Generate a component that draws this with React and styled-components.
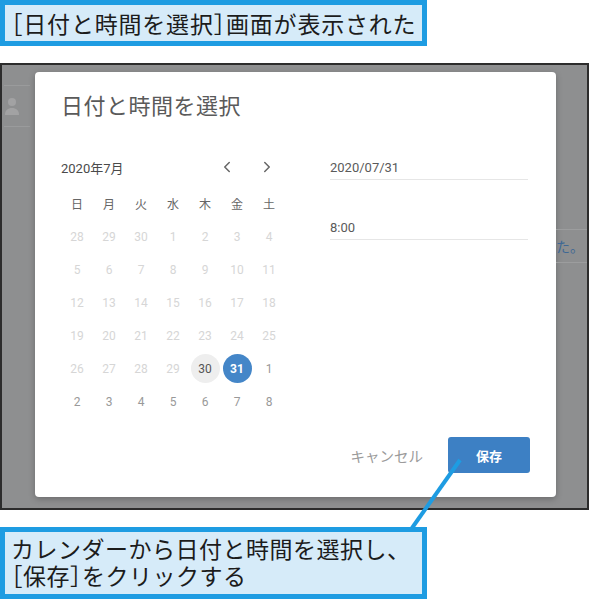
import React from "react";
import styled, { createGlobalStyle } from "styled-components";
import { ChevronLeft, ChevronRight } from "lucide-react";

const weekdays = ["日", "月", "火", "水", "木", "金", "土"];

// 6 rows, first row starts with the tail of June
const days = [
  ...[28, 29, 30].map((d) => ({ d, kind: "muted" })),
  ...Array.from({ length: 29 }, (_, i) => ({ d: i + 1, kind: "muted" })),
  { d: 30, kind: "today" },
  { d: 31, kind: "selected" },
  ...Array.from({ length: 8 }, (_, i) => ({ d: i + 1, kind: "next" })),
];

const App = () => {
  return (
    <>
      <GlobalStyle />
      <Page>
        <Caption>［日付と時間を選択］画面が表示された</Caption>

        <Frame>
          <SideStrip>
            <FaintRule />
            <svg width="16" height="20" viewBox="0 0 16 20">
              <circle cx="8" cy="6" r="4" fill="#a2a2a3" />
              <path d="M1 19c0-5 3-7 7-7s7 2 7 7z" fill="#a2a2a3" />
            </svg>
            <FaintRule />
          </SideStrip>

          <Dialog>
            <Title>日付と時間を選択</Title>
            <Body>
              <Calendar>
                <MonthBar>
                  <MonthLabel>2020年7月</MonthLabel>
                  <NavButtons>
                    <NavButton aria-label="前の月">
                      <ChevronLeft size={18} strokeWidth={2} />
                    </NavButton>
                    <NavButton aria-label="次の月">
                      <ChevronRight size={18} strokeWidth={2} />
                    </NavButton>
                  </NavButtons>
                </MonthBar>
                <DayGrid>
                  {weekdays.map((w) => (
                    <Weekday key={w}>{w}</Weekday>
                  ))}
                  {days.map((day, i) => (
                    <DayCell key={i}>
                      <Day $kind={day.kind}>{day.d}</Day>
                    </DayCell>
                  ))}
                </DayGrid>
              </Calendar>

              <Fields>
                <Field>2020/07/31</Field>
                <Field $spaced>8:00</Field>
              </Fields>
            </Body>

            <Footer>
              <CancelButton>キャンセル</CancelButton>
              <SaveButton>保存</SaveButton>
            </Footer>
          </Dialog>

          <RightStrip>
            <BackdropText>た。</BackdropText>
          </RightStrip>
        </Frame>

        <Caption $bottom>
          カレンダーから日付と時間を選択し、
          <br />
          ［保存］をクリックする
        </Caption>

        <Pointer width="60" height="80" viewBox="0 0 60 80">
          <line x1="55" y1="5" x2="7" y2="73" stroke="#1e9ce2" strokeWidth="4" />
        </Pointer>
      </Page>
    </>
  );
};

export default App;

const GlobalStyle = createGlobalStyle`
  body {
    margin: 0;
    background: #fff;
  }
  * {
    box-sizing: border-box;
  }
`;

const Page = styled.div`
  position: relative;
  width: 600px;
  height: 601px;
  overflow: hidden;
  font-family: Roboto, "Noto Sans CJK JP", sans-serif;
`;

/* "halt" gives half-width brackets that keep the tall CJK glyph */
const Caption = styled.div`
  width: 427px;
  border: 5px solid #1e9ce2;
  background: #d6ebf9;
  color: #1c1c1c;
  font-family: "Noto Sans CJK JP", sans-serif;
  font-feature-settings: "halt";
  font-size: 23px;
  letter-spacing: ${(p) => (p.$bottom ? "0.5px" : "0.8px")};
  line-height: ${(p) => (p.$bottom ? "27px" : "36px")};
  padding: ${(p) => (p.$bottom ? "3px 0 5px 6px" : "0 0 0 6px")};
  margin-top: ${(p) => (p.$bottom ? "17px" : "0")};
  white-space: nowrap;
`;

const Frame = styled.div`
  margin-top: 17px;
  width: 589px;
  height: 447px;
  border: 2px solid #2c2c2c;
  background: #8e8f90;
  display: flex;
  align-items: flex-start;
  padding-top: 7px;
`;

const SideStrip = styled.div`
  width: 33px;
  flex-shrink: 0;
  display: flex;
  flex-direction: column;
  align-items: flex-start;
  gap: 10px;
  padding: 13px 0 0 2px;
`;

const FaintRule = styled.div`
  width: 26px;
  height: 1px;
  background: #9a9b9c;
`;

const Dialog = styled.div`
  width: 521px;
  height: 425px;
  flex-shrink: 0;
  background: #fff;
  border-radius: 4px;
  box-shadow: 0 2px 6px rgba(0, 0, 0, 0.25);
  padding: 0 26px;
  display: flex;
  flex-direction: column;
`;

const Title = styled.h2`
  margin: 0;
  padding-top: 21px;
  font-size: 22px;
  letter-spacing: 0.5px;
  line-height: 28px;
  font-weight: 400;
  color: #5a5a5a;
`;

const Body = styled.div`
  display: flex;
  gap: 45px;
  margin-top: 34px;
`;

const Calendar = styled.div`
  width: 224px;
`;

const MonthBar = styled.div`
  height: 24px;
  display: flex;
  align-items: center;
  justify-content: space-between;
`;

const MonthLabel = styled.span`
  font-size: 13px;
  color: #4a4a4a;
`;

const NavButtons = styled.div`
  display: flex;
  gap: 16px;
  margin-right: 6px;
`;

const NavButton = styled.button`
  width: 24px;
  height: 24px;
  padding: 0;
  border: none;
  background: none;
  color: #666;
  display: flex;
  align-items: center;
  justify-content: center;
`;

const DayGrid = styled.div`
  display: grid;
  grid-template-columns: repeat(7, 32px);
  grid-auto-rows: 33px;
  margin-top: 8px;
`;

const Weekday = styled.div`
  display: flex;
  align-items: center;
  justify-content: center;
  font-size: 12px;
  color: #666;
`;

const DayCell = styled.div`
  display: flex;
  align-items: center;
  justify-content: center;
`;

const dayColors = {
  muted: "#d6d6d6",
  next: "#999999",
  today: "#555",
  selected: "#fff",
};

const Day = styled.span`
  width: 29px;
  height: 29px;
  border-radius: 50%;
  display: flex;
  align-items: center;
  justify-content: center;
  font-size: 12px;
  color: ${(p) => dayColors[p.$kind]};
  font-weight: ${(p) => (p.$kind === "selected" ? 700 : 400)};
  background: ${(p) =>
    p.$kind === "selected" ? "#4486c8" : p.$kind === "today" ? "#eeeeee" : "transparent"};
`;

const Fields = styled.div`
  width: 198px;
`;

const Field = styled.div`
  height: 25px;
  margin-top: ${(p) => (p.$spaced ? "35px" : "0")};
  border-bottom: 1px solid #e6e6e6;
  display: flex;
  align-items: center;
  font-size: 13px;
  color: #5a5a5a;
`;

const Footer = styled.div`
  margin-top: 19px;
  display: flex;
  justify-content: flex-end;
  align-items: center;
  gap: 17px;
`;

const CancelButton = styled.button`
  border: none;
  background: none;
  padding: 0 8px;
  font-family: inherit;
  font-size: 14.5px;
  color: #9b9b9b;
`;

const SaveButton = styled.button`
  width: 82px;
  height: 36px;
  border: none;
  border-radius: 3px;
  background: #3d80c4;
  color: #fff;
  font-family: inherit;
  font-size: 13px;
  font-weight: 700;
`;

const RightStrip = styled.div`
  flex: 1;
  padding-top: 157px;
  overflow: hidden;
`;

const BackdropText = styled.div`
  height: 34px;
  border-top: 1px solid #9c9d9e;
  border-bottom: 1px solid #9c9d9e;
  display: flex;
  align-items: center;
  font-size: 14px;
  color: #3f6894;
  white-space: nowrap;
`;

const Pointer = styled.svg`
  position: absolute;
  left: 405px;
  top: 455px;
  pointer-events: none;
`;
